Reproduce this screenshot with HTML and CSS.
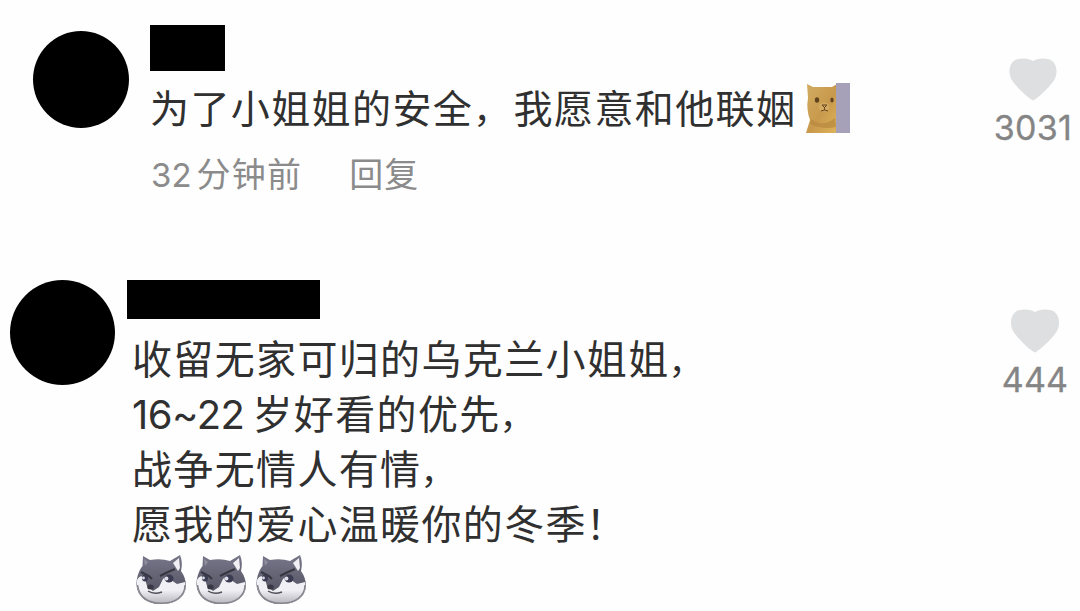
FILE: index.html
```html
<!DOCTYPE html>
<html lang="zh-CN">
<head>
<meta charset="utf-8">
<title>评论</title>
<link rel="stylesheet" href="styles.css">
</head>
<body>
<svg class="defs" aria-hidden="true">
  <defs>
    <linearGradient id="fur" x1="0" y1="0" x2="0" y2="1"><stop offset="0" stop-color="#77778a"/><stop offset="1" stop-color="#4a4957"/></linearGradient>
    <linearGradient id="muzzle" x1="0" y1="0" x2="0" y2="1"><stop offset="0.5" stop-color="#f1f0f5"/><stop offset="1" stop-color="#b5b4bc"/></linearGradient>
    <linearGradient id="gold" x1="0" y1="0" x2="1" y2="1"><stop offset="0" stop-color="#d2ad62"/><stop offset="0.55" stop-color="#c8994c"/><stop offset="1" stop-color="#dfb45b"/></linearGradient>
    <symbol id="heart" viewBox="0 0 48 43">
      <path d="M24 42.500C20 41 7 29 2.500 21.500C-1.500 14 .5 3.500 8 1.200C15-.3 20 .6 24 3C28 .6 33-.3 40 1.200C47.500 3.500 49.500 14 45.500 21.500C41 29 28 41 24 42.500Z"/>
    </symbol>
    <symbol id="husky" viewBox="0 0 52 52">
      <path d="M1.500 29C2 21 5 15 7.500 12L8 2L15 6Q26 4 35 7L45 1Q48 8 46 17Q51 24 51 32C50 44 40 50 26 50C11 50 1.500 42 1.500 29Z" fill="url(#fur)"/>
      <path d="M2 26Q6 19 10 25L12 32L18 37L24 33L28 25Q31 21 36 26L42 30L50 28C53 42 42 50 26 50C9 50 1 40 2 26Z" fill="url(#muzzle)"/>
      <path d="M38 9L44 4L45 14L43 17Z" fill="#f2eff3"/>
      <path d="M9 5L13 8L10 12Z" fill="#908e9c"/>
      <path d="M6 18L14 22L17 25M25 22L33 18L40 15" fill="none" stroke="#363641" stroke-width="2"/>
      <ellipse cx="10" cy="24" rx="3" ry="3.600" fill="#3b3b52"/>
      <ellipse cx="34" cy="24.500" rx="4.500" ry="4" fill="#3b3b52"/>
      <circle cx="8.500" cy="24" r="1.400" fill="#dcdde9"/><circle cx="31.500" cy="24.500" r="1.900" fill="#dcdde9"/>
      <ellipse cx="15.500" cy="33" rx="3.300" ry="2.500" fill="#393743"/>
      <path d="M13 37Q19 41 27 38" fill="none" stroke="#52505b" stroke-width="1.500"/>
      <path d="M2.500 31C4 43 13 49.300 26 49.300C41 49.300 50 42 50 31" fill="none" stroke="#85848d" stroke-width="1.500"/>
    </symbol>
  </defs>
</svg>
<main class="comments">
  <article class="comment first">
    <div class="avatar"></div>
    <div class="content">
      <div class="name"></div>
      <p class="message"><span>为了小姐姐的安全<span class="stop">，</span>我愿意和他联姻</span><svg class="cat" viewBox="0 0 46 50">
        <path d="M2 1L8 4H27L32 1V50H1L5 37Q1 26 3 15Z" fill="url(#gold)"/>
        <path d="M6 36Q17 45 30 35L31 44Q18 47 5 41Z" fill="#b5853e" opacity=".65"/>
        <path d="M31 0H45V50H31Z" fill="#a6a1b8"/>
        <ellipse cx="12" cy="17" rx="2.200" ry="2.800" fill="#61431f"/><ellipse cx="27" cy="17" rx="1.700" ry="2.500" fill="#61431f"/>
        <ellipse cx="19" cy="24" rx="5.500" ry="4.500" fill="#d2aa62"/>
        <path d="M17 22H22L19.500 24.500ZM19.500 24V27M16 28Q19.500 26 23 28" fill="none" stroke="#69451f" stroke-width="1"/>
      </svg></p>
      <div class="meta"><span><span class="num">32</span>分钟前</span><span class="reply">回复</span></div>
    </div>
    <div class="like"><svg class="heart"><use href="#heart"/></svg><span>3031</span></div>
  </article>
  <article class="comment second">
    <div class="avatar"></div>
    <div class="content">
      <div class="name"></div>
      <p class="message">收留无家可归的乌克兰小姐姐<span class="stop">，</span><br><span class="num">16~22</span>岁好看的优先<span class="stop">，</span><br>战争无情人有情<span class="stop">，</span><br>愿我的爱心温暖你的冬季<span class="mark">！</span></p>
      <div class="emojis"><svg><use href="#husky"/></svg><svg><use href="#husky"/></svg><svg><use href="#husky"/></svg></div>
    </div>
    <div class="like"><svg class="heart"><use href="#heart"/></svg><span>444</span></div>
  </article>
</main>
</body>
</html>
```
FILE: styles.css
```css
* { box-sizing: border-box; }
body { margin: 0; background: #fefefe; font-family: "Noto Sans CJK SC", sans-serif; }
svg { display: block; flex: none; }
.defs { position: absolute; width: 0; height: 0; }
.comments { width: 1080px; height: 611px; overflow: hidden; }
.comment { display: flex; align-items: flex-start; }
.avatar { flex: none; background: #000; border-radius: 50%; }
.content { flex: 1; min-width: 0; }
.name { background: #000; }
.message { margin: 0; color: #303030; white-space: nowrap; }
.num { font-family: Inter, sans-serif; line-height: 1; }
.like { flex: none; display: flex; flex-direction: column; align-items: center; color: #858585; font: 34px/40px Inter, sans-serif; -webkit-text-stroke: .3px #858585; }
.heart { fill: #dedfe0; stroke: none; }

.first { height: 280px; padding: 25px 6px 0 33px; }
.first .avatar { width: 96px; height: 97px; margin-top: 6px; }
.first .content { padding-left: 21px; }
.first .name { width: 75px; height: 46px; }
.first .message { display: flex; align-items: flex-start; height: 56px; margin-top: 7px; font-size: 39px; line-height: 56px; letter-spacing: 1.400px; }
.first .stop { margin-right: 3px; font-size: 36px; line-height: 1; }
.cat { width: 46px; height: 50px; margin: 5px 0 0 9px; }
.meta { display: flex; gap: 48px; margin: 15px 0 0 1px; color: #8b8b8b; font-size: 34px; line-height: 48px; letter-spacing: 1.200px; }
.meta .num { margin-right: 5px; font-size: 33px; letter-spacing: 0; }
.reply { margin-left: -1px; }
.first .like { width: 82px; padding-top: 33px; letter-spacing: .3px; }
.first .heart { width: 48px; height: 43px; }
.first .like span { margin-top: 7px; }

.second { padding: 0 10px 0 10px; }
.second .avatar { width: 105px; height: 105px; }
.second .content { padding-left: 12px; }
.second .name { width: 193px; height: 39px; }
.second .message { height: 220px; margin: 11px 0 0 5px; font-size: 40px; line-height: 55px; letter-spacing: 1.350px; }
.second .stop { margin-left: -1px; font-size: 35px; line-height: 1; }
.second .mark { margin-left: -1px; }
.second .num { margin-right: 8px; letter-spacing: -.5px; }
.emojis { display: flex; gap: 8px; margin: 4px 0 0 8px; }
.emojis svg { width: 52px; height: 52px; }
.second .like { width: 70px; padding-top: 29px; }
.second .heart { width: 50px; height: 44px; }
.second .like span { margin-top: 7px; letter-spacing: .2px; }
```
